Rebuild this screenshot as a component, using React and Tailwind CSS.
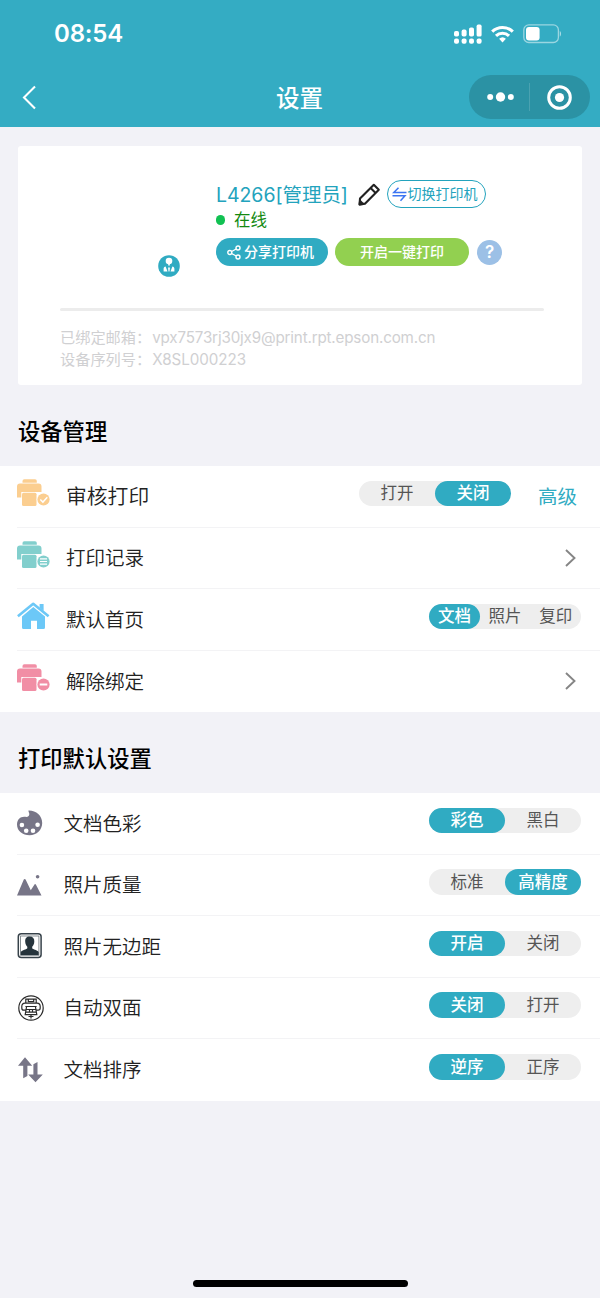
import { useState } from "react";
import clsx from "clsx";

const StatusBar = () => (
  <div className="h-[67px] flex items-center justify-between pl-[54px] pr-[38px] pt-px text-white">
    <span className="text-[24px] leading-none font-semibold font-['Inter'] tracking-[-0.2px]">08:54</span>
    <div className="flex items-center">
      {/* Dual sim signal */}
      <svg width="28" height="20" viewBox="0 0 28 20" fill="currentColor">
        <rect x="0" y="7" width="5" height="5.6" rx="1.8" />
        <rect x="7.6" y="5.6" width="5" height="7" rx="1.8" />
        <rect x="15" y="3.4" width="5" height="9.2" rx="1.8" />
        <rect x="22.6" y="0.6" width="5" height="12" rx="1.6" />
        <rect x="0" y="14.4" width="5" height="5.4" rx="2" />
        <rect x="7.6" y="14.4" width="5" height="5.4" rx="2" />
        <rect x="15" y="14.4" width="5" height="5.4" rx="2" />
        <rect x="22.6" y="14.4" width="5" height="5.4" rx="2" />
      </svg>
      <svg className="ml-[9px]" width="23" height="18" viewBox="0 0 23 18" fill="none" stroke="currentColor" strokeWidth="3.1">
        <path d="M1.2 6.6a14.8 14.8 0 0 1 20.6 0" />
        <path d="M5 10.9a9.4 9.4 0 0 1 13 0" />
        <path d="M11.5 17.4l-3.4-3.6a5 5 0 0 1 6.8 0z" fill="currentColor" stroke="none" />
      </svg>
      <svg className="ml-[9px]" width="39" height="20" viewBox="0 0 39 20">
        <rect x="0.8" y="0.9" width="34.6" height="17.6" rx="5" fill="none" stroke="#fff" strokeOpacity="0.5" strokeWidth="1.3" />
        <rect x="3" y="3" width="13.6" height="13.4" rx="3" fill="#fff" />
        <path d="M36.8 7v5.6c1.6-.7 1.6-4.9 0-5.6z" fill="#fff" fillOpacity="0.6" />
      </svg>
    </div>
  </div>
);

const NavBar = () => (
  <div className="h-[60px] grid grid-cols-3 items-center pl-[22px] pr-[10px] text-white">
    <svg width="15" height="25" viewBox="0 0 15 25" fill="none" stroke="currentColor" strokeWidth="2.1">
      <path d="M13 1.5L2 12.5L13 23.5" />
    </svg>
    <h1 className="text-center text-[23.5px] leading-none font-medium pr-[13px] pt-[3px]">设置</h1>
    <div className="justify-self-end w-[121px] h-[44px] rounded-full bg-[#2b92a4] flex items-center">
      <svg className="ml-[18px]" width="27" height="10" viewBox="0 0 27 10" fill="currentColor">
        <circle cx="3.2" cy="5" r="3" />
        <circle cx="13.5" cy="5" r="4.7" />
        <circle cx="23.8" cy="5" r="3" />
      </svg>
      <div className="w-px h-[28px] bg-white/15 ml-[15px]"></div>
      <svg className="ml-[17.5px]" width="25" height="25" viewBox="0 0 25 25">
        <circle cx="12.5" cy="12.5" r="10.8" fill="none" stroke="#fff" strokeWidth="3" />
        <circle cx="12.5" cy="12.5" r="4.6" fill="#fff" />
      </svg>
    </div>
  </div>
);

const PrinterCard = () => (
  <div className="mx-[18px] mt-[19px] h-[239px] rounded-[3px] bg-white px-[42px] pt-[33px]">
    <div className="flex h-[100px]">
      <div className="w-[156px] flex items-end justify-end pr-[36px] pb-[2px]">
        <svg width="22" height="22" viewBox="0 0 22 22">
          <circle cx="11" cy="11" r="10.8" fill="#30abc2" />
          <circle cx="11" cy="6" r="3.3" fill="#fff" />
          <path d="M9.600 8h2.800l-1.400 3.400z" fill="#fff" />
          <path d="M5.600 16.400v-2.500c0-1.400.8-2 2-2.400l1.900 4.900zM16.400 16.400v-2.500c0-1.400-.8-2-2-2.400l-1.900 4.900zM11 12l.9 1-.4 3.400h-1l-.4-3.400z" fill="#fff" />
        </svg>
      </div>
      <div>
        <div className="flex items-center h-[30px]">
          <span className="pt-[3px] text-[19.5px] leading-none text-[#23a3bd] whitespace-nowrap w-[142px] tracking-[-0.05px]">L4266[管理员]</span>
          <svg width="23" height="23" viewBox="0 0 23 23" fill="none" stroke="#222" strokeWidth="2.1" strokeLinejoin="round">
            <path d="M2 15.6L15.8 1.800l5 5L7.200 20.600l-5.600.8z" />
            <path d="M12.600 5l5 5" />
            <path d="M1.600 21.400l.5-3.400 2.900 2.900z" fill="#222" />
          </svg>
          <button className="ml-[6px] w-[99px] h-[28px] rounded-full border-[1.5px] border-[#23a3bd] text-[#23a3bd] text-[14px] leading-none flex items-center justify-center whitespace-nowrap pr-[4px]">
            <svg className="mr-px" width="15" height="15" viewBox="0 0 15 15" fill="none" stroke="#3b74f2" strokeWidth="1.5">
              <path d="M6.500 .8L1.800 5.500H14.500M.5 8.800H13L8.500 13.800" />
            </svg>
            切换打印机
          </button>
        </div>
        <div className="flex items-center h-[22px]">
          <span className="w-[9px] h-[10px] rounded-full bg-[#11c152]"></span>
          <span className="ml-[9px] text-[16.5px] leading-none text-[#13890f]">在线</span>
        </div>
        <div className="flex items-center mt-[7px] text-white text-[14px] leading-none font-medium">
          <button className="w-[112px] h-[28px] rounded-full bg-[#30abc2] flex items-center justify-center whitespace-nowrap pr-[3px]">
            <svg className="mr-[3px]" width="14" height="15" viewBox="0 0 14 15" fill="none" stroke="#fff" strokeWidth="1.4">
              <circle cx="2.8" cy="7.5" r="2" />
              <circle cx="11" cy="3" r="2" />
              <circle cx="11" cy="12" r="2" />
              <path d="M4.6 6.5l4.6-2.5M4.6 8.5l4.6 2.5" />
            </svg>
            分享打印机
          </button>
          <button className="ml-[7px] w-[134px] h-[28px] rounded-full bg-[#92d050]">开启一键打印</button>
          <button className="ml-[8px] size-[25px] rounded-full bg-[#9cc0e6] font-['Inter'] text-[17px] font-semibold">?</button>
        </div>
      </div>
    </div>
    <div className="mt-[28.5px] -mr-[4px] h-[3px] rounded-full bg-[#ececec]"></div>
    <div className="mt-[16px] text-[15.2px] leading-[22px] text-[#d0d0d2] whitespace-nowrap">
      <p>已绑定邮箱：<span className="ml-px tracking-[-0.17px]">vpx7573rj30jx9@print.rpt.epson.com.cn</span></p>
      <p>设备序列号：<span className="ml-px tracking-[-0.05px]">X8SL000223</span></p>
    </div>
  </div>
);

// Printer body shared by three rows, the badge sits on the lower right
const PrinterIcon = ({ color, children }) => (
  <svg width="33" height="28" viewBox="0 0 33 28">
    <path d="M5.5 3.8V2A1.800 1.800 0 0 1 7.300.2H18A1.800 1.800 0 0 1 19.800 2v1.800z" fill={color} />
    <path d="M0 18.500V7.500a3 3 0 0 1 3-3H21.500a3 3 0 0 1 3 3V13H4.300V18.500z" fill={color} />
    <rect x="5" y="13.700" width="14.500" height="13.300" rx="1.500" fill={color} />
    <circle cx="26.500" cy="20.500" r="6.800" fill="#fff" />
    <circle cx="26.500" cy="20.500" r="6.100" fill={color} />
    <g fill="none" stroke="#fff" strokeWidth="1.500">{children}</g>
  </svg>
);

const ReviewIcon = () => (
  <PrinterIcon color="#fbce90">
    <path d="M23.300 20.500l2.600 2.600 4.400-4.800" />
  </PrinterIcon>
);

const RecordIcon = () => (
  <PrinterIcon color="#82cfcd">
    <path d="M23 17.800h7M23 20.500h7M23 23.200h7" strokeWidth="1.200" />
  </PrinterIcon>
);

const UnbindIcon = () => (
  <PrinterIcon color="#f18ea5">
    <path d="M22.700 20.500h7.600" strokeWidth="2" />
  </PrinterIcon>
);

const HomeIcon = () => (
  <svg width="33" height="28" viewBox="0 0 33 28" fill="#6cc8f7">
    <path d="M.9 14.200L16.200 1.800L31.600 14.200" fill="none" stroke="#6cc8f7" strokeWidth="2.600" strokeLinejoin="round" />
    <path d="M22.600 2h4v7l-4-3.400z" />
    <path d="M16.300 5L28 14.400V25.500a1.500 1.500 0 0 1-1.500 1.500H20V18.800H14V27H6.500A1.500 1.500 0 0 1 5 25.500V14.400z" />
  </svg>
);

const PaletteIcon = () => (
  <svg width="26" height="26" viewBox="0 0 26 26">
    <path d="M11.500.5C19 .3 25.200 5.400 25.200 13c0 7-5.600 12.300-12.600 12.300S0 21 0 14.500C0 9 4 6.300 8 6.800c3 .4 4.500-.7 4.300-3C12.200 2.500 11.200 1.600 11.500.5z" fill="#777587" />
    <g fill="#fff">
      <circle cx="4.900" cy="15" r="2.300" />
      <circle cx="9.200" cy="20.700" r="2.300" />
      <circle cx="16" cy="20.700" r="2.300" />
      <circle cx="20.600" cy="14.700" r="2.300" />
    </g>
  </svg>
);

const QualityIcon = () => (
  <svg width="26" height="22" viewBox="0 0 26 22" fill="#777587">
    <path d="M0 21.500L6.800 5.500a1 1 0 0 1 1.800 0L13.800 16.200L17.300 10.800a1 1 0 0 1 1.700 0L24.500 21.500z" />
    <circle cx="20.600" cy="2.800" r="1.800" />
  </svg>
);

const PortraitIcon = () => (
  <svg width="26" height="26" viewBox="0 0 26 26">
    <rect x="1.300" y="0.800" width="22.800" height="23.800" rx="3" fill="#fff" stroke="#37424a" strokeWidth="1.500" />
    <rect x="3.600" y="3" width="18.300" height="19.300" fill="#fff" stroke="#6c757b" strokeWidth="0.800" />
    <path d="M12.700 3.500c3.300 0 4.800 2 4.600 5-.1 2.600-.9 4-2.100 5.200v1.500c.8 1.400 5 1.600 6.500 3.800V22H3.800v-3c1.500-2.200 5.700-2.400 6.500-3.800v-1.500c-1.200-1.200-2-2.600-2.100-5.200-.2-3 1.200-5 4.500-5z" fill="#26343c" />
  </svg>
);

const DuplexIcon = () => (
  <svg className="ml-px" width="26" height="26" viewBox="0 0 26 26" fill="none" stroke="#2b2b2b" strokeWidth="1.200">
    <circle cx="13" cy="13" r="12.200" />
    <path d="M7.800 8V4.200h10.400V8M10.300 4.200v2.500h5.400V4.200" />
    <path d="M8 15.200H5.800c-1.600 0-2-.9-2-2.200v-1.500C3.800 9.300 5 8.200 7 8.200h12c2 0 3.200 1.100 3.200 3.300V13c0 1.300-.4 2.200-2 2.200H18" />
    <path d="M7.400 11.500h11.200M8.600 11.500l-1.400 8.200h11.600l-1.400-8.200M8.300 14.500h9.400M8 17.200h10M11.500 14.500v3M14.500 14.500v3M10.500 21.500h5M13 20v3.500" />
  </svg>
);

const SortIcon = () => (
  <svg width="26" height="26" viewBox="0 0 26 26" fill="#777587">
    <path d="M8 .2L15.200 8.700H10.400V19L6.200 21.200V8.700H1z" />
    <path d="M18.500 25.300L11.200 17.500H16.400V7.200L20.500 5V17.500H25.800z" />
  </svg>
);

const Segmented = ({ options, initial, small }) => {
  const [active, setActive] = useState(initial);

  return (
    <div className="flex h-[25.5px] rounded-full bg-[#eeeeee] mb-[6px]">
      {options.map((option) => (
        <button
          key={option}
          onClick={() => setActive(option)}
          className={clsx(
            "h-[25.5px] rounded-full text-[16.5px] leading-none whitespace-nowrap",
            small ? "w-[50.6px]" : "w-[76px]",
            active === option ? "bg-[#30abc2] text-white font-medium" : "text-[#555]"
          )}
        >
          {option}
        </button>
      ))}
    </div>
  );
};

const Chevron = () => (
  <svg className="mr-[4px]" width="13" height="20" viewBox="0 0 13 20" fill="none" stroke="#858585" strokeWidth="1.9">
    <path d="M2 2l8.500 8L2 18" />
  </svg>
);

const deviceRows = [
  {
    label: "审核打印",
    icon: ReviewIcon,
    large: true,
    control: (
      <>
        <Segmented options={["打开", "关闭"]} initial="关闭" />
        <span className="ml-[27px] mr-[4px] pt-[3px] text-[19.5px] leading-none text-[#30abc2]">高级</span>
      </>
    ),
  },
  { label: "打印记录", icon: RecordIcon, control: <Chevron /> },
  { label: "默认首页", icon: HomeIcon, control: <Segmented options={["文档", "照片", "复印"]} initial="文档" small /> },
  { label: "解除绑定", icon: UnbindIcon, control: <Chevron /> },
];

const printRows = [
  { label: "文档色彩", icon: PaletteIcon, control: <Segmented options={["彩色", "黑白"]} initial="彩色" /> },
  { label: "照片质量", icon: QualityIcon, control: <Segmented options={["标准", "高精度"]} initial="高精度" /> },
  { label: "照片无边距", icon: PortraitIcon, control: <Segmented options={["开启", "关闭"]} initial="开启" /> },
  { label: "自动双面", icon: DuplexIcon, control: <Segmented options={["关闭", "打开"]} initial="关闭" /> },
  { label: "文档排序", icon: SortIcon, control: <Segmented options={["逆序", "正序"]} initial="逆序" /> },
];

const Section = ({ title, rows, device }) => (
  <section>
    <h2 className={clsx("pl-[18px] text-[22.3px] leading-[32px] font-medium text-black pb-[18px]", device ? "pt-[31px]" : "pt-[31px]")}>
      {title}
    </h2>
    <div className="bg-white">
      {rows.map((row, index) => {
        const Icon = row.icon;
        return (
          <div key={row.label} className="h-[61.5px] pl-[17px]">
            <div className={clsx("h-full flex items-center pr-[19px]", index < rows.length - 1 && "border-b border-[#f3f3f5]")}>
              <div className={clsx("shrink-0", device ? "w-[49px] pb-[6px]" : "w-[46.5px]")}>
                <Icon />
              </div>
              <span className={clsx("flex-1 pt-[2px] leading-none font-[350] text-[#222]", row.large ? "text-[20.8px]" : "text-[19.5px]")}>
                {row.label}
              </span>
              <div className="flex items-center">{row.control}</div>
            </div>
          </div>
        );
      })}
    </div>
  </section>
);

export default function App() {
  return (
    <div className="w-[600px] h-[1298px] overflow-hidden bg-[#f2f2f7] flex flex-col font-['Inter','Noto_Sans_CJK_SC',sans-serif]">
      <header className="h-[127px] shrink-0 bg-[#34acc3]">
        <StatusBar />
        <NavBar />
      </header>
      <PrinterCard />
      <Section title="设备管理" rows={deviceRows} device />
      <Section title="打印默认设置" rows={printRows} />
      <div className="mt-auto mb-[11px] mx-auto w-[215px] h-[7px] rounded-full bg-black"></div>
    </div>
  );
}
